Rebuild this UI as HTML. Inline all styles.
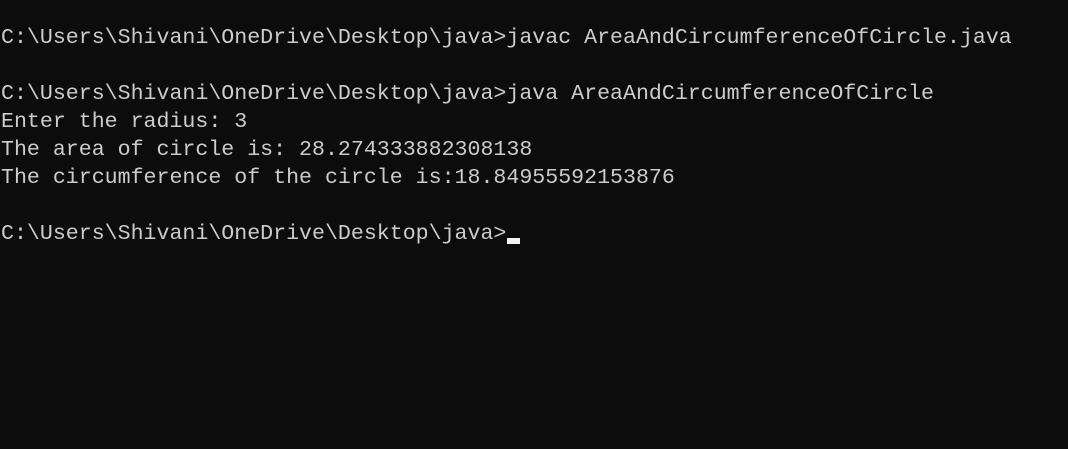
<!DOCTYPE html>
<html><head><style>
html,body{margin:0;padding:0;background:#0c0c0c;width:1068px;height:449px;overflow:hidden}
pre{margin:0;position:absolute;left:1px;top:24px;font-family:"Liberation Mono",monospace;font-size:21.6px;line-height:28px;color:#cccccc;white-space:pre}
.cur{position:absolute;left:507px;top:238px;width:13px;height:6px;background:#f2f2f2}
</style></head><body>
<pre>C:\Users\Shivani\OneDrive\Desktop\java&gt;javac AreaAndCircumferenceOfCircle.java

C:\Users\Shivani\OneDrive\Desktop\java&gt;java AreaAndCircumferenceOfCircle
Enter the radius: 3
The area of circle is: 28.274333882308138
The circumference of the circle is:18.84955592153876

C:\Users\Shivani\OneDrive\Desktop\java&gt;</pre>
<div class="cur"></div>
</body></html>
